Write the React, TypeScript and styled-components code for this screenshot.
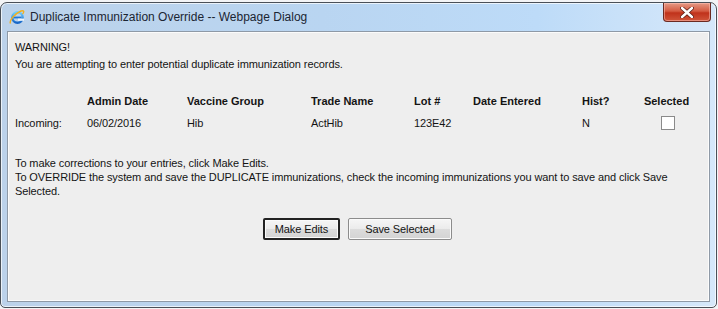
import React from 'react';
import styled, { createGlobalStyle } from 'styled-components';

const Global = createGlobalStyle`
  html, body {
    margin: 0;
    padding: 0;
    width: 718px;
    height: 309px;
    overflow: hidden;
    background: #f3f4f6;
  }
  #root {
    height: 100%;
  }
`;

const Desk = styled.div`
  height: 309px;
  display: flex;
  padding: 2px 1px 1px 0;
  box-sizing: border-box;
`;

const Window = styled.div`
  flex: 1;
  display: flex;
  flex-direction: column;
  border: 1px solid #4a5058;
  border-radius: 7px 7px 5px 5px;
  box-shadow: inset 0 0 0 1px rgba(255, 255, 255, 0.7);
  background: linear-gradient(90deg, #bcd2ea 0%, #b9d5f1 45%, #bddbf8 75%, #d6e8fa 100%);
  padding: 0 6px 5px 6px;
`;

const TitleBar = styled.div`
  height: 28px;
  display: flex;
  align-items: flex-start;
`;

const TitleIcon = styled.svg`
  width: 16px;
  height: 16px;
  margin: 6px 5px 0 2px;
  flex: none;
`;

const TitleText = styled.div`
  font-family: 'Liberation Sans', Arial, sans-serif;
  font-size: 12px;
  color: #1b2533;
  margin-top: 7px;
  white-space: nowrap;
`;

const CloseButton = styled.div`
  margin-left: auto;
  margin-right: -1px;
  width: 46px;
  height: 18px;
  border: 1px solid #6b2a22;
  border-top: none;
  border-radius: 0 0 4px 4px;
  background: linear-gradient(180deg, #e59a86 0%, #d45b42 45%, #c0321b 55%, #d0553a 100%);
  box-shadow: inset 0 0 0 1px rgba(255, 200, 190, 0.5);
  display: flex;
  align-items: center;
  justify-content: center;
`;

const Client = styled.div`
  flex: 1;
  background: #eeeeee;
  border: 1px solid #8e99a6;
  box-shadow: inset 0 0 0 1px #fbfbfb;
  padding: 8px 7px 0 7px;
  font-family: 'Liberation Sans', Arial, sans-serif;
  font-size: 11px;
  letter-spacing: -0.1px;
  color: #141414;
`;

const Line = styled.div<{ $gap?: number }>`
  line-height: 14px;
  margin-top: ${p => p.$gap ?? 0}px;
  white-space: nowrap;
`;

const Grid = styled.div`
  display: grid;
  grid-template-columns: 72px 100px 124px 103px 59px 109px 61px 47px;
  margin-top: 23px;
  row-gap: 8px;
  line-height: 14px;
`;

const Head = styled.div<{ $center?: boolean }>`
  font-weight: bold;
  letter-spacing: 0;
  text-align: ${p => (p.$center ? 'center' : 'left')};
`;

const Cell = styled.div<{ $center?: boolean }>`
  display: flex;
  align-items: center;
  justify-content: ${p => (p.$center ? 'center' : 'flex-start')};
`;

const Check = styled.span`
  width: 12px;
  height: 12px;
  border: 1px solid #8a8a8a;
  background: #ffffff;
  margin-left: 2px;
`;

const Notes = styled.div`
  margin-top: 26px;
  line-height: 14px;
  width: 655px;
`;

const Buttons = styled.div`
  display: flex;
  justify-content: center;
  gap: 8px;
  margin-top: 20px;
  padding-right: 2px;
`;

const Button = styled.button<{ $default?: boolean; $w: number }>`
  width: ${p => p.$w}px;
  height: 22px;
  font-family: 'Liberation Sans', Arial, sans-serif;
  font-size: 11px;
  letter-spacing: -0.1px;
  color: #141414;
  padding: 0;
  border-radius: 2px;
  border: ${p => (p.$default ? '2px solid #222222' : '1px solid #8c8c8c')};
  background: linear-gradient(180deg, #f6f6f6 0%, #ebebeb 50%, #dcdcdc 51%, #d3d3d3 100%);
  box-shadow: inset 0 0 0 1px #fafafa;
`;

const IeIcon = () => (
  <TitleIcon viewBox="0 0 16 16">
    <defs>
      <linearGradient id="ieg" x1="0" y1="0" x2="0" y2="1">
        <stop offset="0" stopColor="#6ed0ff" />
        <stop offset="1" stopColor="#1565c8" />
      </linearGradient>
    </defs>
    <circle cx="8.5" cy="8.5" r="5.2" fill="none" stroke="url(#ieg)" strokeWidth="2.4" />
    <rect x="4.5" y="7.6" width="8" height="1.8" fill="#1e78d8" />
    <rect x="9" y="9.6" width="6" height="2.2" fill="#eef4fb" />
    <path d="M1.5 14.5 C0 12 5 5 12 2 C15 1 15.5 3 13.5 5" fill="none" stroke="#f0b020" strokeWidth="1.4" />
  </TitleIcon>
);

const CloseX = () => (
  <svg width="14" height="11" viewBox="0 0 14 11">
    <path d="M2 1 L12 10 M12 1 L2 10" stroke="#5a1c14" strokeWidth="4" strokeLinecap="round" />
    <path d="M2 1 L12 10 M12 1 L2 10" stroke="#ffffff" strokeWidth="2.4" strokeLinecap="round" />
  </svg>
);

const rows = [
  { label: 'Incoming:', date: '06/02/2016', group: 'Hib', trade: 'ActHib', lot: '123E42', entered: '', hist: 'N' },
];

export default function App() {
  return (
    <>
      <Global />
      <Desk>
        <Window>
          <TitleBar>
            <IeIcon />
            <TitleText>Duplicate Immunization Override -- Webpage Dialog</TitleText>
            <CloseButton>
              <CloseX />
            </CloseButton>
          </TitleBar>
          <Client>
            <Line>WARNING!</Line>
            <Line $gap={3}>You are attempting to enter potential duplicate immunization records.</Line>
            <Grid>
              <Head />
              <Head>Admin Date</Head>
              <Head>Vaccine Group</Head>
              <Head>Trade Name</Head>
              <Head>Lot #</Head>
              <Head>Date Entered</Head>
              <Head>Hist?</Head>
              <Head $center>Selected</Head>
              {rows.map(r => (
                <React.Fragment key={r.lot}>
                  <Cell>{r.label}</Cell>
                  <Cell>{r.date}</Cell>
                  <Cell>{r.group}</Cell>
                  <Cell>{r.trade}</Cell>
                  <Cell>{r.lot}</Cell>
                  <Cell>{r.entered}</Cell>
                  <Cell>{r.hist}</Cell>
                  <Cell $center>
                    <Check />
                  </Cell>
                </React.Fragment>
              ))}
            </Grid>
            <Notes>
              To make corrections to your entries, click Make Edits.
              <br />
              To OVERRIDE the system and save the DUPLICATE immunizations, check the incoming immunizations you want to save and click Save Selected.
            </Notes>
            <Buttons>
              <Button $default $w={77}>Make Edits</Button>
              <Button $w={104}>Save Selected</Button>
            </Buttons>
          </Client>
        </Window>
      </Desk>
    </>
  );
}
